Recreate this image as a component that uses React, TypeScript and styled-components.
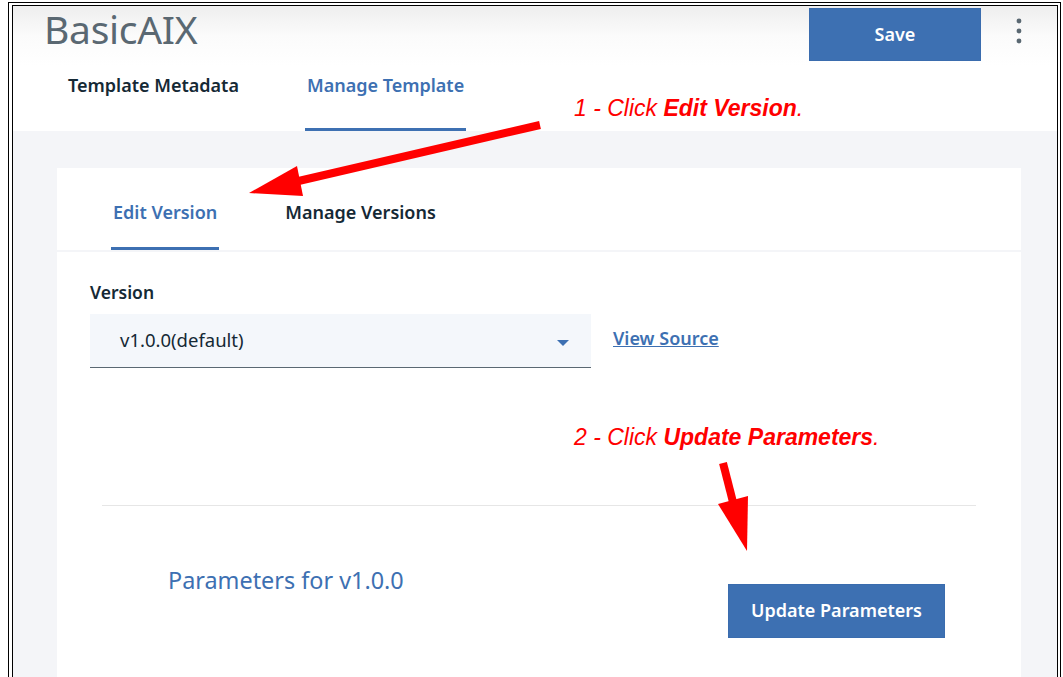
import React from 'react';
import styled, { createGlobalStyle } from 'styled-components';

const GlobalStyle = createGlobalStyle`
    html, body {
        margin: 0;
        padding: 0;
        background: #ffffff;
    }
    body {
        font-family: "Noto Sans", "Open Sans", Arial, sans-serif;
        color: #152935;
        overflow: hidden;
    }
`;

const BLUE = '#3d70b2';
const INK = '#152935';
const SLATE = '#5a6872';
const WASH = '#f4f5f8';

const Page = styled.div`
    position: relative;
    width: 1063px;
    height: 677px;
    overflow: hidden;
`;

const Frame = styled.div`
    box-sizing: border-box;
    margin: 2px 2px 0 8px;
    height: 675px;
    padding: 2px 2px 0 3px;
    border: 1px solid #000;
    border-bottom: none;
`;

const Screen = styled.div`
    box-sizing: border-box;
    height: 100%;
    border: 1px solid #000;
    border-bottom: none;
    display: flex;
    flex-direction: column;
    background: ${WASH};
`;

const Header = styled.header`
    height: 125px;
    background: linear-gradient(#eeeeee 0px, #fbfbfb 30px, #ffffff 60px);
    display: flex;
    flex-direction: column;
`;

const TopRow = styled.div`
    display: flex;
    align-items: flex-start;
    height: 60px;
    padding-left: 31px;
`;

const Title = styled.h1`
    margin: 0;
    flex: 1;
    font-size: 39px;
    line-height: 46px;
    font-weight: 400;
    color: ${SLATE};
    letter-spacing: -0.3px;
`;

const PrimaryButton = styled.button<{ width: number; height: number }>`
    box-sizing: border-box;
    width: ${p => p.width}px;
    height: ${p => p.height}px;
    padding: 0 0 2px;
    border: 1px solid #3a6cae;
    background: ${BLUE};
    color: #ffffff;
    font-family: inherit;
    font-size: 18px;
    font-weight: 600;
    cursor: pointer;
`;

const SaveButton = styled(PrimaryButton)`
    margin-top: 2px;
`;

const Kebab = styled.div`
    width: 76px;
    height: 60px;
    display: flex;
    justify-content: center;
    padding-top: 12px;
    box-sizing: border-box;
`;

const TabList = styled.nav<{ gap: number; pad: number; top: number }>`
    display: flex;
    gap: ${p => p.gap}px;
    padding-left: ${p => p.pad}px;
    padding-top: ${p => p.top}px;
    flex: 1;
`;

const Tab = styled.div<{ active?: boolean }>`
    box-sizing: border-box;
    padding: 0 2px;
    height: 100%;
    font-size: 18px;
    line-height: 20px;
    font-weight: 600;
    color: ${p => (p.active ? BLUE : INK)};
    border-bottom: 3px solid ${p => (p.active ? BLUE : 'transparent')};
`;

const Body = styled.main`
    flex: 1;
    padding: 37px 36px 0 44px;
    display: flex;
    flex-direction: column;
`;

const Card = styled.section`
    flex: 1;
    display: flex;
    flex-direction: column;
    gap: 2px;
`;

const CardTabs = styled.div`
    height: 82px;
    background: #ffffff;
    display: flex;
`;

const CardContent = styled.div`
    flex: 1;
    background: #ffffff;
    padding: 30px 0 0 33px;
`;

const FieldLabel = styled.label`
    display: block;
    font-size: 17.5px;
    line-height: 20px;
    font-weight: 600;
    color: ${INK};
    margin-bottom: 12px;
`;

const FieldRow = styled.div`
    display: flex;
    align-items: center;
    gap: 22px;
`;

const Select = styled.div`
    box-sizing: border-box;
    width: 501px;
    height: 54px;
    background: #f4f7fb;
    border-bottom: 1px solid ${SLATE};
    display: flex;
    align-items: center;
    justify-content: space-between;
    padding: 0 22px 2px 30px;
    font-size: 18.5px;
    color: ${INK};
`;

const Caret = styled.span`
    width: 0;
    height: 0;
    border-left: 6px solid transparent;
    border-right: 6px solid transparent;
    border-top: 6px solid ${BLUE};
    margin-top: 6px;
`;

const SourceLink = styled.a`
    font-size: 18px;
    font-weight: 600;
    color: ${BLUE};
    text-decoration: underline;
    margin-top: -7px;
`;

const Divider = styled.hr`
    margin: 137px 45px 0 12px;
    border: none;
    border-top: 1px solid #e6e6e6;
`;

const ParamsRow = styled.div`
    display: flex;
    align-items: flex-start;
    padding-left: 78px;
`;

const ParamsTitle = styled.h2`
    flex: 0 0 560px;
    margin: 59px 0 0;
    font-size: 23.4px;
    line-height: 30px;
    font-weight: 400;
    color: ${BLUE};
`;

const UpdateButton = styled(PrimaryButton)`
    margin-top: 78px;
`;

const Overlay = styled.svg`
    position: absolute;
    left: 0;
    top: 0;
    pointer-events: none;
`;

const Note = styled.div<{ top: number }>`
    position: absolute;
    left: 574px;
    top: ${p => p.top}px;
    font-family: "Liberation Sans", Arial, sans-serif;
    font-style: italic;
    font-size: 23px;
    line-height: 24px;
    color: #ff0000;
    white-space: nowrap;

    b {
        font-weight: 700;
    }
`;

function KebabIcon() {
    return (
        <svg width="6" height="26" viewBox="0 0 6 26">
            <circle cx="3" cy="3" r="2.4" fill={SLATE} />
            <circle cx="3" cy="13" r="2.4" fill={SLATE} />
            <circle cx="3" cy="23" r="2.4" fill={SLATE} />
        </svg>
    );
}

export default function App() {
    return (
        <Page>
            <GlobalStyle />
            <Frame>
                <Screen>
                    <Header>
                        <TopRow>
                            <Title>BasicAIX</Title>
                            <SaveButton width={172} height={53}>Save</SaveButton>
                            <Kebab>
                                <KebabIcon />
                            </Kebab>
                        </TopRow>
                        <TabList gap={64} pad={53} top={9}>
                            <Tab>Template Metadata</Tab>
                            <Tab active>Manage Template</Tab>
                        </TabList>
                    </Header>
                    <Body>
                        <Card>
                            <CardTabs>
                                <TabList gap={64} pad={54} top={34}>
                                    <Tab active>Edit Version</Tab>
                                    <Tab>Manage Versions</Tab>
                                </TabList>
                            </CardTabs>
                            <CardContent>
                                <FieldLabel>Version</FieldLabel>
                                <FieldRow>
                                    <Select>
                                        <span>v1.0.0(default)</span>
                                        <Caret />
                                    </Select>
                                    <SourceLink href="#">View Source</SourceLink>
                                </FieldRow>
                                <Divider />
                                <ParamsRow>
                                    <ParamsTitle>Parameters for v1.0.0</ParamsTitle>
                                    <UpdateButton width={217} height={54}>Update Parameters</UpdateButton>
                                </ParamsRow>
                            </CardContent>
                        </Card>
                    </Body>
                </Screen>
            </Frame>

            <Note top={96}>
                1 - Click <b>Edit Version</b>.
            </Note>
            <Note top={425}>
                2 - Click <b>Update Parameters</b>.
            </Note>

            <Overlay width="1063" height="677" viewBox="0 0 1063 677">
                <line x1="540" y1="125" x2="290" y2="183" stroke="#ff0000" strokeWidth="8" />
                <polygon points="249,193 297,166 303,196" fill="#ff0000" />
                <line x1="723" y1="463" x2="734" y2="506" stroke="#ff0000" strokeWidth="8" />
                <polygon points="718,504 748,496 747,551" fill="#ff0000" />
            </Overlay>
        </Page>
    );
}
